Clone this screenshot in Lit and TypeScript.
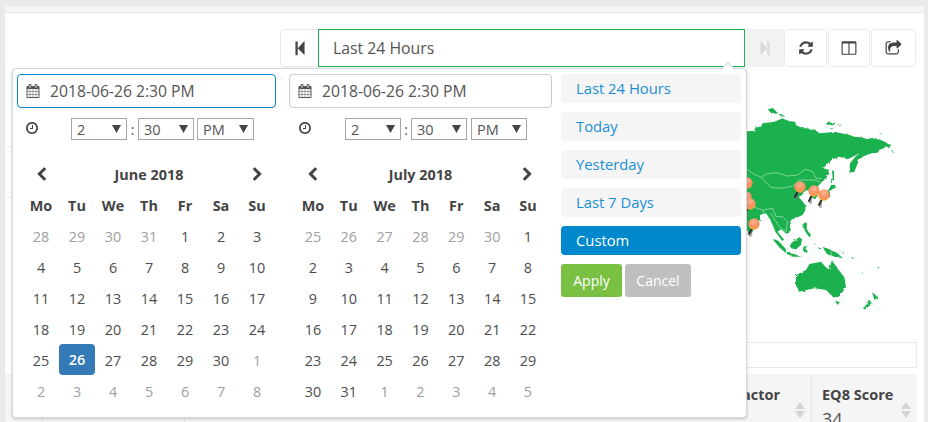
import { LitElement, html, css, svg } from "lit";
import { customElement } from "lit/decorators.js";

const P = {
  back: "M1363 141q19-19 32-13t13 32v1472q0 26-13 32t-32-13l-710-710q-9-9-13-19v710q0 26-19 45t-45 19h-128q-26 0-45-19t-19-45v-1408q0-26 19-45t45-19h128q26 0 45 19t19 45v710q4-10 13-19z",
  refresh: "M1639 1056q0 5-1 7-64 268-268 434.5t-478 166.5q-146 0-282.5-55t-243.5-157l-129 129q-19 19-45 19t-45-19-19-45v-448q0-26 19-45t45-19h448q26 0 45 19t19 45-19 45l-137 137q71 66 161 102t187 36q134 0 250-65t186-179q11-17 53-117 8-23 30-23h192q13 0 22.5 9.5t9.5 22.5zm25-800v448q0 26-19 45t-45 19h-448q-26 0-45-19t-19-45 19-45l138-138q-148-137-349-137-134 0-250 65t-186 179q-11 17-53 117-8 23-30 23h-199q-13 0-22.5-9.5t-9.5-22.5v-7q65-268 270-434.5t480-166.5q146 0 284 55.5t245 156.5l130-129q19-19 45-19t45 19 19 45z",
  columns: "M224 1536h608v-1152h-640v1120q0 13 9.5 22.5t22.5 9.5zm1376-32v-1120h-640v1152h608q13 0 22.5-9.5t9.5-22.5zm128-1216v1216q0 66-47 113t-113 47h-1344q-66 0-113-47t-47-113v-1216q0-66 47-113t113-47h1344q66 0 113 47t47 113z",
  share: "M1472 989v259q0 119-84.5 203.5t-203.5 84.5h-832q-119 0-203.5-84.5t-84.5-203.5v-832q0-119 84.5-203.5t203.5-84.5h255q13 0 22.5 9.5t9.5 22.5q0 27-26 32-77 26-133 60-10 4-16 4h-112q-66 0-113 47t-47 113v832q0 66 47 113t113 47h832q66 0 113-47t47-113v-214q0-19 18-29 28-13 54-37 16-16 35-8 21 9 21 29zm237-496l-384 384q-18 19-45 19-12 0-25-5-39-17-39-59v-192h-160q-323 0-438 131-119 137-74 473 3 23-20 34-8 2-12 2-16 0-26-13-10-14-21-31t-39.5-68.5-49.5-99.5-38.5-114-17.5-122q0-49 3.5-91t14-90 28-88 47-81.5 68.5-74 94.5-61.5 124.5-48.5 159.5-30.5 196.5-11h160v-192q0-42 39-59 13-5 25-5 26 0 45 19l384 384q19 19 19 45t-19 45z",
  calendar: "M192 1664h288v-288h-288v288zm352 0h320v-288h-320v288zm-352-352h288v-320h-288v320zm352 0h320v-320h-320v320zm-352-384h288v-288h-288v288zm736 736h320v-288h-320v288zm-384-736h320v-288h-320v288zm768 736h288v-288h-288v288zm-384-352h320v-320h-320v320zm-352-864v-288q0-13-9.5-22.5t-22.5-9.5h-64q-13 0-22.5 9.5t-9.5 22.5v288q0 13 9.5 22.5t22.5 9.5h64q13 0 22.5-9.5t9.5-22.5zm736 864h288v-320h-288v320zm-384-384h320v-288h-320v288zm384 0h288v-288h-288v288zm32-480v-288q0-13-9.5-22.5t-22.5-9.5h-64q-13 0-22.5 9.5t-9.5 22.5v288q0 13 9.5 22.5t22.5 9.5h64q13 0 22.5-9.5t9.5-22.5zm384-64v1280q0 52-38 90t-90 38h-1408q-52 0-90-38t-38-90v-1280q0-52 38-90t90-38h128v-96q0-66 47-113t113-47h64q66 0 113 47t47 113v96h384v-96q0-66 47-113t113-47h64q66 0 113 47t47 113v96h128q52 0 90 38t38 90z",
  clock: "M1024 544v448q0 14-9 23t-23 9h-320q-14 0-23-9t-9-23v-64q0-14 9-23t23-9h224v-352q0-14 9-23t23-9h64q14 0 23 9t9 23zm416 352q0-148-73-273t-198-198-273-73-273 73-198 198-73 273 73 273 198 198 273 73 273-73 198-198 73-273zm224 0q0 209-103 385.5t-279.5 279.5-385.5 103-385.5-103-279.5-279.5-103-385.5 103-385.5 279.5-279.5 385.5-103 385.5 103 279.5 279.5 103 385.5z",
  left: "M1427 301l-531 531 531 531q19 19 19 45t-19 45l-166 166q-19 19-45 19t-45-19l-742-742q-19-19-19-45t19-45l742-742q19-19 45-19t45 19l166 166q19 19 19 45t-19 45z",
  right: "M1363 877l-742 742q-19 19-45 19t-45-19l-166-166q-19-19-19-45t19-45l531-531-531-531q-19-19-19-45t19-45l166-166q19-19 45-19t45 19l742 742q19 19 19 45t-19 45z",
};

const icon = (d: string, size: number, cls = "") =>
  html`<svg class="ico ${cls}" width=${size} height=${size} viewBox="0 0 1792 1792"><path d=${d} fill="currentColor"></path></svg>`;

const LAND_TOP = [
  "-10,95 22,92 30,82 45,80 50,70 85,65 110,55 125,63 148,65 150,75 170,85 185,85 195,90 205,88 220,100 240,98 265,95 285,100 305,103 325,110 345,112 365,118 385,112 410,122 425,130 440,137 420,142 400,150 395,158 375,160 350,170 340,178 325,215 310,218 312,190 330,168 343,158 325,168 305,178 280,170 260,178 245,190 232,205 250,210 248,225 225,250 212,262 215,290 200,295 192,270 178,272 170,285 158,290 178,315 178,330 170,345 135,360 130,375 135,390 122,402 105,388 95,395 115,420 108,422 88,395 80,375 70,355 60,340 42,345 42,360 30,370 18,400 8,400 0,385 -10,380",
  "65,28 80,24 97,40 78,42",
  "97,42 115,45 105,50",
  "240,68 268,68 262,76 245,75",
  "275,72 288,75 280,77",
  "250,85 262,85 258,88",
  "400,100 410,102 402,104",
  "435,150 443,153 438,155",
  "258,212 264,212 264,240 256,250 254,245 260,235",
  "255,255 270,255 262,268 250,272 250,292 238,298 236,285 248,268",
];
const LAND_LOW = [
  "80,148 95,150 120,178 120,190 100,172",
  "122,185 170,200 145,200 122,192",
  "135,160 160,142 168,148 165,165 150,178 135,175",
  "172,170 185,168 178,175 186,185 172,187",
  "175,97 183,100 182,118 195,135 190,142 178,125 172,110",
  "230,170 250,178 275,190 290,205 265,200 240,190",
  "150,255 180,240 190,222 225,215 240,232 250,235 258,210 272,232 295,262 300,290 280,320 262,322 240,300 205,295 160,305 150,285",
  "268,335 282,335 275,345",
  "378,306 396,322 385,330 382,318",
  "372,332 378,338 360,358 350,356",
  "203,160 207,160 206,164",
  "347,248 351,248 349,252",
  "394,231 400,231 397,235",
  "318,204 324,204 321,207",
  "285,185 295,185 290,188",
  "215,172 228,176 220,178",
];
const BORDERS_TOP = "M0,205 20,220 45,232 75,262 105,265 140,258 160,240 205,240 222,245 M45,232 62,222 90,218 125,228 155,225 178,208 200,215 210,235 228,235";
const BORDERS_LOW = "M20,50 50,60 80,55 90,80 110,80 125,95 120,125 100,110 90,95 75,70 M0,45 20,50 M255,180 255,205 M50,60 62,90";

const PINS = [[3, 249], [0, 291], [12, 312], [24, 372], [162, 261], [204, 273], [234, 285]];

const JUNE = [
  [28, 29, 30, 31, 1, 2, 3], [4, 5, 6, 7, 8, 9, 10], [11, 12, 13, 14, 15, 16, 17],
  [18, 19, 20, 21, 22, 23, 24], [25, 26, 27, 28, 29, 30, 1], [2, 3, 4, 5, 6, 7, 8],
];
const JULY = [
  [25, 26, 27, 28, 29, 30, 1], [2, 3, 4, 5, 6, 7, 8], [9, 10, 11, 12, 13, 14, 15],
  [16, 17, 18, 19, 20, 21, 22], [23, 24, 25, 26, 27, 28, 29], [30, 31, 1, 2, 3, 4, 5],
];
const DOW = ["Mo", "Tu", "We", "Th", "Fr", "Sa", "Su"];

@customElement("app-root")
export class AppRoot extends LitElement {
  static styles = css`
    :host {
      display: block; position: relative; width: 928px; height: 422px; overflow: hidden;
      background: #e9ebe9; font-family: "Open Sans", sans-serif; color: #555; font-size: 14px;
    }
    .ico { display: block; flex: none; }
    .flip { transform: scaleX(-1); }
    .page { display: flex; flex-direction: column; height: 416px; margin: 6px 4px 0 5px; background: #fff; }
    .strip { height: 6px; background: #f5f5f5; border-bottom: 1px solid #e8e9ea; flex: none; }
    .toolbar { display: flex; justify-content: flex-end; margin-top: 16px; padding-right: 8px; height: 38px; flex: none; }
    .tb { width: 38px; box-sizing: border-box; border: 1px solid #e8eaec; border-radius: 4px; display: flex; align-items: center; justify-content: center; color: #444; background: #fff; }
    .tb.first { border-radius: 4px 0 0 4px; border-right: 0; }
    .tb.off { width: 39px; background: #f2f2f2; border: 0; border-radius: 0; color: #d9d9d9; }
    .tb.r { width: 43px; margin-right: 1px; }
    .tb.r2 { width: 42px; margin-right: 1px; }
    .tb.s { width: 45px; }
    .range-input { width: 427px; box-sizing: border-box; border: 1px solid #1fb14f; display: flex; align-items: center; padding-left: 14px; font-size: 15.8px; color: #555; }
    .mid { display: flex; justify-content: space-between; height: 275px; flex: none; }
    .rows { width: 300px; padding-top: 79px; }
    .rows div { height: 50px; border-top: 1px solid #eeeeee; }
    .map { display: block; margin: 33px 18px 0 0; overflow: visible; }
    .search { height: 26px; box-sizing: border-box; margin: 0 7px 6px 500px; border: 1px solid #e8e9ea; flex: none; }
    .thead { display: flex; margin-right: 7px; flex: 1; background: #f5f5f5; overflow: hidden; font-size: 14.5px; }
    .th { box-sizing: border-box; border-right: 1px solid #e6e6e6; }
    .w1 { width: 38px; } .w2 { width: 142px; } .w3 { flex: 1; border: 0; }
    .th.factor { width: 88px; padding: 11px 6px 0 10px; display: flex; justify-content: space-between; font-weight: 700; color: #444; }
    .th.score { width: 105px; border: 0; padding: 11px 6px 0 10px; display: flex; justify-content: space-between; font-weight: 700; color: #444; }
    .val { font-weight: 400; font-size: 18px; color: #555; line-height: 24px; margin-top: 3px; }
    .sort { margin-top: 17px; display: block; flex: none; }

    .popup {
      position: absolute; left: 12px; top: 68px; width: 735px; height: 350px; box-sizing: border-box;
      background: #fff; border: 1px solid #d4d6dc; border-radius: 4px; box-shadow: 0 1px 3px rgba(60,60,90,.28);
      padding: 5px 4px; display: flex;
    }
    .caret {
      position: absolute; left: 710px; top: -5px; width: 9px; height: 9px; background: #fff;
      border-top: 1px solid #d4d6dc; border-left: 1px solid #d4d6dc; transform: rotate(45deg);
    }
    .col { display: flex; flex-direction: column; }
    .c1 { width: 259px; margin-right: 13px; }
    .c2 { width: 263px; margin-right: 9px; }
    .date { height: 34px; box-sizing: border-box; border: 1px solid #ccc; border-radius: 4px; display: flex; align-items: center; padding-left: 8px; gap: 10px; font-size: 15.7px; color: #555; }
    .date.focus { border-color: #0288d1; }
    .time { display: flex; align-items: center; height: 22px; margin-top: 10px; color: #444; }
    .clockw { width: 46px; margin-left: 8px; margin-top: -3px; }
    .c2 .clockw { margin-left: 9px; width: 47px; }
    .sel { width: 56px; height: 22px; box-sizing: border-box; border: 1px solid #a6a6a6; display: flex; align-items: center; justify-content: space-between; padding: 0 5px 0 5px; color: #555; font-size: 14.5px; }
    .sel.p { margin-left: 3px; width: 57px; }
    .c2 .sel.p { margin-left: 4px; width: 56px; }
    .colon { width: 11px; text-align: center; color: #555; }
    .c2 .colon { width: 10px; }
    .cal { display: grid; grid-template-columns: repeat(7, 36px); grid-auto-rows: 31px; margin: 19px 0 0 6px; }
    .c2 .cal { grid-template-columns: repeat(7, 35.85px); }
    .cell { display: flex; align-items: center; justify-content: center; color: #4d4d4d; font-size: 14.4px; }
    .cell.off { color: #a0a0a0; }
    .cell.dow { font-weight: 700; color: #444; }
    .cell.sel-day { background: #337ab7; color: #fff; border-radius: 4px; font-weight: 600; height: 31px; margin-top: -1px; }
    .title { grid-column: span 5; font-weight: 700; color: #444; font-size: 14.4px; display: flex; align-items: center; justify-content: center; }
    .nav { display: flex; align-items: center; justify-content: center; color: #444; }
    .c3 { width: 180px; gap: 9px; }
    .rng { height: 29px; box-sizing: border-box; background: #f5f5f5; border-radius: 4px; padding: 0 0 2px 15px; display: flex; align-items: center; color: #1a8fd6; font-size: 14.8px; }
    .rng.on { background: #0088cc; color: #fff; }
    .btns { display: flex; gap: 3px; }
    .btn { height: 33px; display: flex; align-items: center; justify-content: center; color: #fff; border-radius: 3px; font-size: 14px; }
    .apply { width: 61px; background: #7ac143; }
    .cancel { width: 66px; background: #bfbfbf; }
  `;

  private month(name: string, weeks: number[][]) {
    const isOff = (r: number, v: number) => (r === 0 && v > 7) || (r >= 4 && v < 15);
    return html`<div class="cal">
      <div class="nav">${icon(P.left, 15)}</div>
      <div class="title">${name}</div>
      <div class="nav">${icon(P.right, 15)}</div>
      ${DOW.map((d) => html`<div class="cell dow">${d}</div>`)}
      ${weeks.map((w, r) =>
        w.map((v) => {
          const on = name === "June 2018" && v === 26;
          return html`<div class="cell ${isOff(r, v) ? "off" : ""} ${on ? "sel-day" : ""}">${v}</div>`;
        })
      )}
    </div>`;
  }

  private time() {
    const arrow = html`<svg class="ico" width="9" height="8" viewBox="0 0 9 8"><path d="M0 0h9L4.500 8z" fill="#444"></path></svg>`;
    return html`<div class="time">
      <div class="clockw">${icon(P.clock, 14)}</div>
      <div class="sel">2${arrow}</div><div class="colon">:</div>
      <div class="sel">30${arrow}</div><div class="sel p">PM${arrow}</div>
    </div>`;
  }

  private picker(cls: string, focus: boolean, name: string, weeks: number[][]) {
    return html`<div class="col ${cls}">
      <div class="date ${focus ? "focus" : ""}">${icon(P.calendar, 14)}<span>2018-06-26 2:30 PM</span></div>
      ${this.time()}
      ${this.month(name, weeks)}
    </div>`;
  }

  private sortIcon() {
    return html`<svg class="sort" width="10" height="16" viewBox="0 0 10 16"><path d="M5 0l5 7H0zM5 16l5-7H0z" fill="#d4d4d4"></path></svg>`;
  }

  render() {
    return html`
      <div class="page">
        <div class="strip"></div>
        <div class="toolbar">
          <div class="tb first">${icon(P.back, 16)}</div>
          <div class="range-input">Last 24 Hours</div>
          <div class="tb off">${icon(P.back, 16, "flip")}</div>
          <div class="tb r">${icon(P.refresh, 16)}</div>
          <div class="tb r2">${icon(P.columns, 16)}</div>
          <div class="tb s">${icon(P.share, 17)}</div>
        </div>
        <div class="mid">
          <div class="rows"><div></div><div></div></div>
          <svg class="map" width="160" height="230" viewBox="0 0 480 690">
            <defs>
              <radialGradient id="ball" cx="50%" cy="30%" r="70%">
                <stop offset="0" stop-color="#ffb995"></stop>
                <stop offset=".6" stop-color="#f78e62"></stop>
                <stop offset="1" stop-color="#f3a93c"></stop>
              </radialGradient>
              <filter id="rough" x="-5%" y="-5%" width="110%" height="110%">
                <feTurbulence type="fractalNoise" baseFrequency=".09" numOctaves="2" seed="4"></feTurbulence>
                <feDisplacementMap in="SourceGraphic" scale="9"></feDisplacementMap>
              </filter>
              <filter id="soft"><feGaussianBlur stdDeviation="2"></feGaussianBlur></filter>
            </defs>
            <g fill="#1fb14f" filter="url(#rough)">
              ${LAND_TOP.map((p) => svg`<polygon points=${p}></polygon>`)}
              <g transform="translate(0 270)">${LAND_LOW.map((p) => svg`<polygon points=${p}></polygon>`)}</g>
            </g>
            <g fill="none" stroke="#bfe8cc" stroke-width="1.800">
              <path d=${BORDERS_TOP}></path>
              <g transform="translate(0 270)"><path d=${BORDERS_LOW}></path></g>
            </g>
            ${PINS.map(([x, y]) => svg`<g transform="translate(${x} ${y})">
              <path d="M-8 16L-12 38" stroke="#777" stroke-width="9" opacity=".6" filter="url(#soft)"></path>
              <path d="M-5 10L-16 32" stroke="#2b2b2b" stroke-width="6"></path>
              <circle r="17" fill="url(#ball)"></circle>
            </g>`)}
          </svg>
        </div>
        <div class="search"></div>
        <div class="thead">
          <div class="th w1"></div>
          <div class="th w2"></div>
          <div class="th w3"></div>
          <div class="th factor"><span>Factor</span>${this.sortIcon()}</div>
          <div class="th score">
            <div>EQ8 Score<div class="val">34</div></div>
            ${this.sortIcon()}
          </div>
        </div>
      </div>
      <div class="popup">
        <div class="caret"></div>
        ${this.picker("c1", true, "June 2018", JUNE)}
        ${this.picker("c2", false, "July 2018", JULY)}
        <div class="col c3">
          <div class="rng">Last 24 Hours</div>
          <div class="rng">Today</div>
          <div class="rng">Yesterday</div>
          <div class="rng">Last 7 Days</div>
          <div class="rng on">Custom</div>
          <div class="btns">
            <div class="btn apply">Apply</div>
            <div class="btn cancel">Cancel</div>
          </div>
        </div>
      </div>
    `;
  }
}
